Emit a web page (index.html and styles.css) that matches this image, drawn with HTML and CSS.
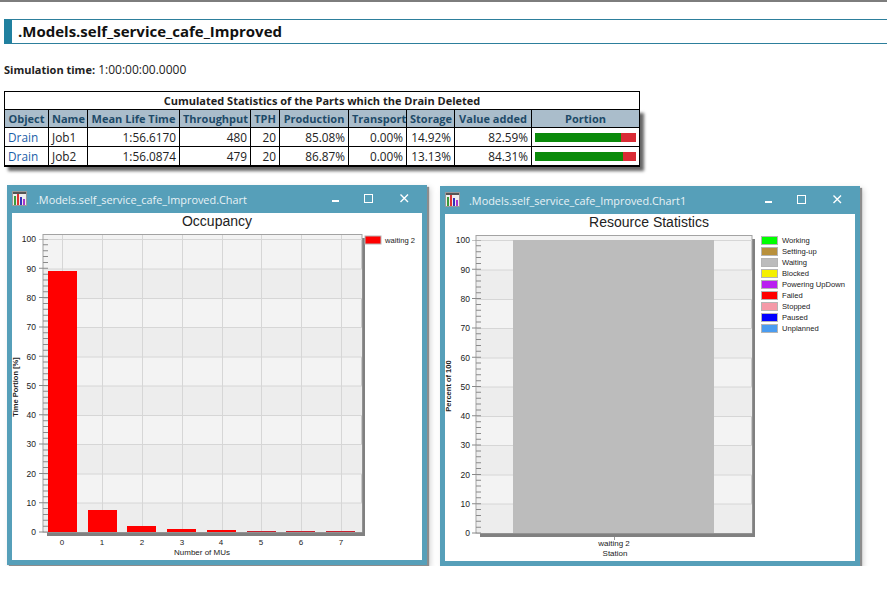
FILE: index.html
```html
<!DOCTYPE html>
<html lang="en">
  <head>
    <meta charset="UTF-8" />
    <title>.Models.self_service_cafe_Improved</title>
    <link rel="stylesheet" href="styles.css">
  </head>
  <body>
    <h1 class="page-title">.Models.self_service_cafe_Improved</h1>
    <p class="sim-time"><b>Simulation time:</b> 1:00:00:00.0000</p>

    <table class="stats">
      <colgroup>
        <col class="c-object"><col class="c-name"><col class="c-life"><col class="c-through"><col class="c-tph">
        <col class="c-prod"><col class="c-trans"><col class="c-stor"><col class="c-value"><col class="c-portion">
      </colgroup>
      <caption>Cumulated Statistics of the Parts which the Drain Deleted</caption>
      <thead>
        <tr>
          <th>Object</th><th>Name</th><th>Mean Life Time</th><th>Throughput</th><th>TPH</th>
          <th>Production</th><th>Transport</th><th>Storage</th><th>Value added</th><th>Portion</th>
        </tr>
      </thead>
      <tbody>
        <tr>
          <td><a href="#">Drain</a></td><td>Job1</td><td class="num">1:56.6170</td><td class="num">480</td><td class="num">20</td>
          <td class="num">85.08%</td><td class="num">0.00%</td><td class="num">14.92%</td><td class="num">82.59%</td>
          <td class="portion"><div class="bar"><div class="bar-ok" style="width: 85.08%"></div></div></td>
        </tr>
        <tr>
          <td><a href="#">Drain</a></td><td>Job2</td><td class="num">1:56.0874</td><td class="num">479</td><td class="num">20</td>
          <td class="num">86.87%</td><td class="num">0.00%</td><td class="num">13.13%</td><td class="num">84.31%</td>
          <td class="portion"><div class="bar"><div class="bar-ok" style="width: 86.87%"></div></div></td>
        </tr>
      </tbody>
    </table>

    <div class="windows">
      <!-- Occupancy chart, svg coordinates are page pixels -->
      <section class="window">
        <header class="titlebar">
          <svg class="app-icon" width="15" height="15" viewBox="0 0 15 15">
            <rect x="0.5" y="0.5" width="14" height="14" fill="#eee" stroke="#999"/>
            <rect x="1" y="1" width="13" height="2" fill="#555"/>
            <rect x="2" y="5" width="2" height="9" fill="#3a9a3a"/>
            <rect x="5" y="3" width="2" height="11" fill="#d33"/>
            <rect x="8" y="6" width="2" height="8" fill="#33b"/>
            <rect x="11" y="8" width="2" height="6" fill="#a3c"/>
          </svg>
          <span class="win-title">.Models.self_service_cafe_Improved.Chart</span>
          <div class="controls">
            <svg width="12" height="12" viewBox="0 0 12 12"><rect x="2" y="7" width="7" height="2" fill="#fff"/></svg>
            <svg width="12" height="12" viewBox="0 0 12 12"><rect x="1.5" y="1.5" width="8" height="8" fill="none" stroke="#fff"/></svg>
            <svg width="12" height="12" viewBox="0 0 12 12"><path d="M1.5 1.5l7.5 7.5M9 1.5l-7.5 7.5" stroke="#fff" stroke-width="1.4"/></svg>
          </div>
        </header>
        <svg class="chart" width="410" height="347" viewBox="12 213 410 347">
          <text class="chart-title" x="217" y="226">Occupancy</text>
          <rect x="47" y="238" width="318" height="298" fill="#808080"/>
          <rect x="43" y="234.5" width="319" height="297.5" fill="#f3f3f3" stroke="#a3a3a3"/>
          <g fill="#ededed">
            <rect x="44" y="269" width="318" height="29"/><rect x="44" y="327.5" width="318" height="29.5"/>
            <rect x="44" y="386" width="318" height="29.5"/><rect x="44" y="444.5" width="318" height="29.5"/>
            <rect x="44" y="503" width="318" height="29"/>
          </g>
          <path class="grid" d="M44 239.5H362M44 269H362M44 298.5H362M44 327.5H362M44 357H362M44 386H362M44 415.5H362M44 444.5H362M44 474H362M44 503H362"/>
          <path class="grid" d="M62.5 235V532M102.5 235V532M142.5 235V532M182.5 235V532M222.5 235V532M261.5 235V532M301.5 235V532M341.5 235V532"/>
          <line class="ticks-minor" x1="45.5" y1="532.5" x2="45.5" y2="239" />
          <line class="ticks-major" x1="41" y1="532.5" x2="41" y2="239" />
          <g fill="#f00">
            <rect x="48" y="271" width="29" height="261"/><rect x="88" y="510" width="29" height="22"/>
            <rect x="127" y="526" width="29" height="6"/><rect x="167" y="529" width="29" height="3"/>
            <rect x="207" y="530" width="29" height="2"/>
          </g>
          <g fill="#c8202f">
            <rect x="247" y="531" width="29" height="1"/><rect x="286" y="531" width="29" height="1"/>
            <rect x="326" y="531" width="29" height="1"/>
          </g>
          <g class="y-labels">
            <text x="36" y="242">100</text><text x="36" y="272">90</text><text x="36" y="301">80</text>
            <text x="36" y="330">70</text><text x="36" y="360">60</text><text x="36" y="389">50</text>
            <text x="36" y="418">40</text><text x="36" y="447">30</text><text x="36" y="477">20</text>
            <text x="36" y="506">10</text><text x="36" y="535">0</text>
          </g>
          <g class="x-labels">
            <text x="62" y="545">0</text><text x="102" y="545">1</text><text x="142" y="545">2</text>
            <text x="182" y="545">3</text><text x="221" y="545">4</text><text x="261" y="545">5</text>
            <text x="301" y="545">6</text><text x="341" y="545">7</text>
            <text x="202" y="555">Number of MUs</text>
          </g>
          <text class="axis-y" transform="translate(18 387) rotate(-90)">Time Portion [%]</text>
          <rect class="swatch" x="365" y="236" width="16" height="8" fill="#f00"/>
          <text class="legend" x="385" y="243">waiting 2</text>
        </svg>
      </section>

      <!-- Resource statistics chart -->
      <section class="window window-second">
        <header class="titlebar">
          <svg class="app-icon" width="15" height="15" viewBox="0 0 15 15">
            <rect x="0.5" y="0.5" width="14" height="14" fill="#eee" stroke="#999"/>
            <rect x="1" y="1" width="13" height="2" fill="#555"/>
            <rect x="2" y="5" width="2" height="9" fill="#3a9a3a"/>
            <rect x="5" y="3" width="2" height="11" fill="#d33"/>
            <rect x="8" y="6" width="2" height="8" fill="#33b"/>
            <rect x="11" y="8" width="2" height="6" fill="#a3c"/>
          </svg>
          <span class="win-title">.Models.self_service_cafe_Improved.Chart1</span>
          <div class="controls">
            <svg width="12" height="12" viewBox="0 0 12 12"><rect x="2" y="7" width="7" height="2" fill="#fff"/></svg>
            <svg width="12" height="12" viewBox="0 0 12 12"><rect x="1.5" y="1.5" width="8" height="8" fill="none" stroke="#fff"/></svg>
            <svg width="12" height="12" viewBox="0 0 12 12"><path d="M1.5 1.5l7.5 7.5M9 1.5l-7.5 7.5" stroke="#fff" stroke-width="1.4"/></svg>
          </div>
        </header>
        <svg class="chart" width="410" height="347" viewBox="445 214 410 347">
          <text class="chart-title" x="649" y="227">Resource Statistics</text>
          <rect x="480" y="239" width="275" height="298" fill="#808080"/>
          <rect x="476" y="235.5" width="276" height="297.5" fill="#f3f3f3" stroke="#a3a3a3"/>
          <g fill="#ededed">
            <rect x="477" y="270" width="275" height="29"/><rect x="477" y="328.5" width="275" height="29.5"/>
            <rect x="477" y="387" width="275" height="29.5"/><rect x="477" y="445.5" width="275" height="29.5"/>
            <rect x="477" y="504" width="275" height="29"/>
          </g>
          <path class="grid" d="M477 240.5H752M477 270H752M477 299.5H752M477 328.5H752M477 358H752M477 387H752M477 416.5H752M477 445.5H752M477 475H752M477 504H752"/>
          <line class="ticks-minor" x1="478.5" y1="533.5" x2="478.5" y2="240" />
          <line class="ticks-major" x1="474" y1="533.5" x2="474" y2="240" />
          <rect x="513" y="240" width="201" height="293" fill="#bcbcbc"/>
          <line x1="614.5" y1="537" x2="614.5" y2="540" stroke="#999"/>
          <g class="y-labels">
            <text x="470" y="243">100</text><text x="470" y="273">90</text><text x="470" y="302">80</text>
            <text x="470" y="331">70</text><text x="470" y="361">60</text><text x="470" y="390">50</text>
            <text x="470" y="419">40</text><text x="470" y="448">30</text><text x="470" y="478">20</text>
            <text x="470" y="507">10</text><text x="470" y="536">0</text>
          </g>
          <g class="x-labels">
            <text x="614" y="546">waiting 2</text>
            <text x="615" y="556">Station</text>
          </g>
          <text class="axis-y" transform="translate(451 386) rotate(-90)">Percent of 100</text>
          <rect class="swatch" x="761.5" y="236.5" width="16" height="8" fill="#0f0"/>
          <rect class="swatch" x="761.5" y="247.5" width="16" height="8" fill="#b8903c"/>
          <rect class="swatch" x="761.5" y="258.5" width="16" height="8" fill="#bcbcbc"/>
          <rect class="swatch" x="761.5" y="269.5" width="16" height="8" fill="#f5f000"/>
          <rect class="swatch" x="761.5" y="280.5" width="16" height="8" fill="#b91ff0"/>
          <rect class="swatch" x="761.5" y="291.5" width="16" height="8" fill="#f00"/>
          <rect class="swatch" x="761.5" y="302.5" width="16" height="8" fill="#f59aa8"/>
          <rect class="swatch" x="761.5" y="313.5" width="16" height="8" fill="#00f"/>
          <rect class="swatch" x="761.5" y="324.5" width="16" height="8" fill="#4a9cf0"/>
          <g class="legend">
            <text x="782" y="243">Working</text><text x="782" y="254">Setting-up</text>
            <text x="782" y="265">Waiting</text><text x="782" y="276">Blocked</text>
            <text x="782" y="287">Powering UpDown</text><text x="782" y="298">Failed</text>
            <text x="782" y="309">Stopped</text><text x="782" y="320">Paused</text>
            <text x="782" y="331">Unplanned</text>
          </g>
        </svg>
      </section>
    </div>
  </body>
</html>
```
FILE: styles.css
```css
body {
  font-family: "Open Sans", "Noto Sans", sans-serif;
  background-color: #ffffff;
  color: #222;
  margin: 0;
  border-top: 2px solid #7d7d7d;
  overflow: hidden;
}

.page-title {
  margin: 17px 0 0 4px;
  height: 23px;
  line-height: 23px;
  padding-left: 6px;
  border-top: 1px solid #2d7f9c;
  border-bottom: 1px solid #2d7f9c;
  border-left: 8px solid #20809f;
  font-size: 15px;
  font-weight: 700;
  color: #111;
}

.sim-time {
  margin: 18px 0 0 4px;
  font-size: 12px;
  line-height: 16px;
}

.sim-time b {
  font-size: 11px;
}

.stats {
  margin: 13px 0 0 4px;
  width: 635px;
  table-layout: fixed;
  border-collapse: collapse;
  font-size: 11.8px;
  box-shadow: 4px 4px 3px #666;
  border: 1px solid #000;
  border-bottom-width: 2px;
}

.stats caption {
  height: 17px;
  line-height: 17px;
  font-size: 11px;
  font-weight: 700;
  background-color: #fff;
  border: 1px solid #000;
  border-bottom: none;
}

.stats th,
.stats td {
  border: 1px solid #000;
  padding: 0 3px;
  height: 18px;
  white-space: nowrap;
  overflow: hidden;
}

.stats th {
  height: 17px;
  font-size: 11px;
  background-color: #aabdcb;
  color: #1d4a68;
  font-weight: 700;
  text-align: center;
}

.stats a {
  color: #1a5ea8;
  text-decoration: none;
}

.stats .num {
  text-align: right;
}

.c-object { width: 44px; }
.c-name { width: 39px; }
.c-life { width: 92px; }
.c-through { width: 71px; }
.c-tph { width: 29px; }
.c-prod { width: 69px; }
.c-trans { width: 58px; }
.c-stor { width: 48px; }
.c-value { width: 77px; }
.c-portion { width: 108px; }

.stats .portion {
  padding: 0 3px;
}

.bar {
  height: 9px;
  background-color: #d92b35;
}

.bar-ok {
  height: 100%;
  background-color: #0a8a0a;
}

.windows {
  display: flex;
  align-items: flex-start;
  gap: 13px;
  margin: 18px 0 0 7px;
}

.window {
  width: 420px;
  padding: 0 5px 5px;
  box-sizing: border-box;
  background-color: #569fb9;
  box-shadow: 2px 2px 1px #8c8c8c, 3px 3px 6px #ccc;
}

.window-second {
  margin-top: 1px;
}

.titlebar {
  display: flex;
  align-items: center;
  height: 28px;
  gap: 10px;
}

.app-icon {
  flex: none;
  margin-top: -1px;
}

.win-title {
  font-size: 10.9px;
  color: #e8f2f6;
  margin-left: -1px;
}

.controls {
  display: flex;
  gap: 24px;
  margin-left: auto;
  margin-right: 11px;
  margin-top: -1px;
}

.controls svg:first-child {
  margin-right: -3px;
}

.chart {
  display: block;
  background-color: #fff;
}

.chart text {
  font-family: "Liberation Sans", Arial, sans-serif;
  fill: #222;
}

.chart .chart-title {
  font-size: 14px;
  text-anchor: middle;
}

.grid {
  fill: none;
  stroke: #d6d6d6;
  stroke-width: 1;
}

.ticks-minor {
  stroke: #8a8a8a;
  stroke-width: 5;
  stroke-dasharray: 1 4.86;
}

.ticks-major {
  stroke: #8a8a8a;
  stroke-width: 4;
  stroke-dasharray: 1 28.3;
}

.y-labels text {
  font-size: 8.5px;
  text-anchor: end;
}

.x-labels text {
  font-size: 8px;
  text-anchor: middle;
}

.chart .axis-y {
  font-size: 7.5px;
  text-anchor: middle;
  font-weight: 700;
}

.swatch {
  stroke: #b5b5b5;
  stroke-width: 1;
}

.legend,
.legend text {
  font-size: 7.6px;
}
```
